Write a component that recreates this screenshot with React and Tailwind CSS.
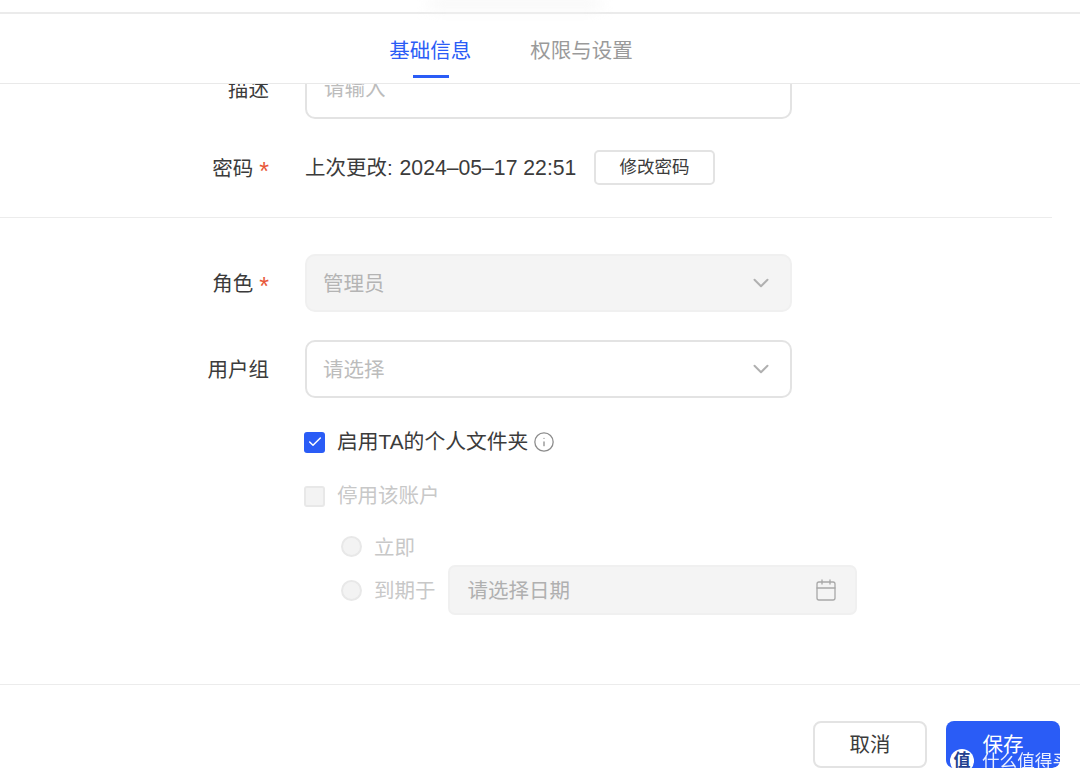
import { ChevronDown, Check, Info, Calendar } from 'lucide-react'

const FONT = 'font-["Liberation_Sans","Noto_Sans_CJK_SC",sans-serif]'

function Label({ text, required }) {
  return (
    <div className="w-[269px] shrink-0 pt-[2px] text-right text-[20.5px] leading-[28px] text-[#3b3b3b]">
      {text}
      {required && <span className="ml-[6px] inline-block translate-y-[4px] text-[25px] leading-[20px] text-[#e8583a]">*</span>}
    </div>
  )
}

function Select({ value, disabled }) {
  return (
    <div className={'flex h-[58px] w-[487px] items-center justify-between rounded-[10px] border-2 pl-[16px] pr-[16px] text-[20.5px] ' + (disabled ? 'border-[#f0f0f0] bg-[#f4f4f4] text-[#b4b4b4]' : 'border-[#e3e3e3] bg-white text-[#bcbcbc]')}>
      <span className="pt-[2px]">{value}</span>
      <ChevronDown className="h-[26px] w-[26px] text-[#b0b0b0]" strokeWidth={1.8} />
    </div>
  )
}

export default function App() {
  return (
    <div className={'relative flex h-[782px] w-[1080px] flex-col overflow-hidden bg-white ' + FONT}>
      <div className="h-[14px] shrink-0 border-b-2 border-[#ebebeb]">
        <div className="mx-auto h-[8px] w-[170px] translate-x-[-25px] bg-[#f4f4f4] blur-[7px]" />
      </div>

      <div className="flex h-[70px] shrink-0 items-stretch justify-center gap-[59px] border-b border-[#e9e9e9] pr-[58px] text-[20.5px]">
        <div className="relative flex items-center pt-[6px] text-[#2a5cf6]">
          基础信息
          <div className="absolute bottom-[5px] left-[24px] h-[3px] w-[36px] bg-[#2a5cf6]" />
        </div>
        <div className="flex items-center pt-[6px] text-[#9a9a9a]">权限与设置</div>
      </div>

      <div className="flex-1 overflow-hidden">
        <div className="mt-[-28px] flex items-start gap-[36px]">
          <div className="pt-[18px]"><Label text="描述" /></div>
          <div className="h-[63px] w-[487px] rounded-[10px] border-2 border-[#e3e3e3] pl-[17px] pt-[17px] text-[20.5px] leading-[28px] text-[#bcbcbc]">请输入</div>
        </div>

        <div className="mt-[31px] flex h-[35px] items-center gap-[36px]">
          <Label text="密码" required />
          <div className="flex items-center text-[20.5px] text-[#3b3b3b]">
            <span className="w-[289px] whitespace-nowrap pt-[1px]">上次更改:<span className="ml-[1px] text-[21.2px]"> 2024–05–17 22:51</span></span>
            <button className="h-[35px] w-[121px] rounded-[5px] border-2 border-[#e3e3e3] text-[17.5px] text-[#3b3b3b]">修改密码</button>
          </div>
        </div>

        <div className="mt-[32px] w-[1052px] border-t border-[#ececec]" />

        <div className="mt-[36px] flex items-center gap-[36px]">
          <Label text="角色" required />
          <Select value="管理员" disabled />
        </div>

        <div className="mt-[28px] flex items-center gap-[36px]">
          <Label text="用户组" />
          <Select value="请选择" />
        </div>

        <div className="ml-[304px] mt-[30px] flex items-center text-[20.8px] leading-[28px] text-[#3b3b3b]">
          <div className="flex h-[21px] w-[21px] items-center justify-center rounded-[3px] bg-[#2a5cf6]">
            <Check className="h-[16px] w-[16px] text-white" strokeWidth={2.2} />
          </div>
          <span className="ml-[12px]">启用TA的个人文件夹</span>
          <Info className="ml-[5px] h-[22px] w-[22px] text-[#8c8c8c]" strokeWidth={1.4} />
        </div>

        <div className="ml-[304px] mt-[26px] flex items-center text-[20.5px] leading-[28px] text-[#c8c8c8]">
          <div className="h-[21px] w-[21px] rounded-[3px] border-2 border-[#e8e8e8] bg-[#f3f3f3]" />
          <span className="ml-[12px]">停用该账户</span>
        </div>

        <div className="ml-[341px] mt-[21px] flex items-center text-[20.5px] leading-[28px] text-[#c8c8c8]">
          <div className="h-[21px] w-[21px] rounded-full border-2 border-[#e8e8e8] bg-[#f3f3f3]" />
          <span className="ml-[12px] pt-[3px]">立即</span>
        </div>

        <div className="ml-[341px] mt-[3px] flex items-center text-[20.5px] leading-[28px] text-[#c8c8c8]">
          <div className="h-[21px] w-[21px] rounded-full border-2 border-[#e8e8e8] bg-[#f3f3f3]" />
          <span className="ml-[12px] pt-[2px]">到期于</span>
          <div className="ml-[12px] flex h-[50px] w-[409px] items-center justify-between rounded-[7px] border-2 border-[#f0f0f0] bg-[#f4f4f4] pl-[18px] pr-[17px] text-[#b0b0b0]">
            <span className="pt-[2px]">请选择日期</span>
            <Calendar className="h-[24px] w-[24px] text-[#a8a8a8]" strokeWidth={1.3} />
          </div>
        </div>
      </div>

      <div className="flex h-[98px] shrink-0 items-start justify-end gap-[19px] border-t border-[#ececec] pr-[20px] pt-[36px] text-[20.5px]">
        <button className="h-[47px] w-[114px] rounded-[8px] border-2 border-[#e3e3e3] pt-[1px] text-[#3b3b3b]">取消</button>
        <button className="h-[47px] w-[114px] rounded-[8px] bg-[#2a5cf6] pt-[2px] text-white">保存</button>
      </div>

      <div className="absolute left-[950px] top-[748px] flex items-center gap-[8px] text-white">
        <div className="flex h-[24px] w-[24px] items-center justify-center rounded-full bg-white text-[17px] font-bold text-[#23408f]">值</div>
        <span className="whitespace-nowrap pt-[1px] text-[17.6px] leading-[24px] opacity-90">什么值得买</span>
      </div>
    </div>
  )
}
